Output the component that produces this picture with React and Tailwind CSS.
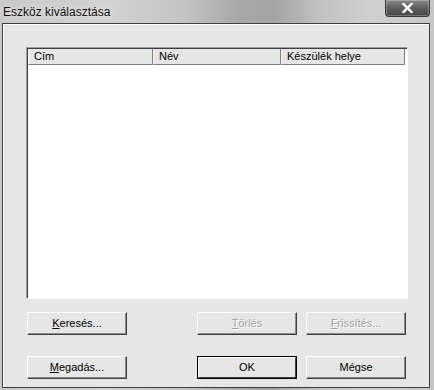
import React from 'react';

const btnBase =
  'w-[100px] h-[23px] flex items-center justify-center text-[11px] bg-[#e6e6e6] border border-t-white border-l-white border-r-[#404040] border-b-[#404040] shadow-[inset_-1px_-1px_0_#8a8a8a]';

function Btn({ label, ul, disabled, isDefault }) {
  const text = (
    <span className={disabled ? 'text-[#a3a3a3] [text-shadow:1px_1px_0_#ffffff]' : 'text-black'}>
      {ul ? (
        <>
          <span className="underline underline-offset-1">{label[0]}</span>
          {label.slice(1)}
        </>
      ) : (
        label
      )}
    </span>
  );
  if (isDefault) {
    return (
      <div className="w-[100px] h-[23px] border border-black flex">
        <div className="flex-1 flex items-center justify-center text-[11px] bg-[#e6e6e6] border border-t-white border-l-white border-r-[#404040] border-b-[#404040]">
          {text}
        </div>
      </div>
    );
  }
  return <div className={btnBase}>{text}</div>;
}

const COLS = [
  { name: 'Cím', w: 'w-[125px]' },
  { name: 'Név', w: 'w-[128px]' },
  { name: 'Készülék helye', w: 'w-[124px]' },
];

export default function App() {
  return (
    <div
      className="w-[434px] h-[390px] flex flex-col overflow-hidden bg-[linear-gradient(90deg,#c9c9c9_0%,#d2d2d2_25%,#c4c4c4_42%,#a8a8a8_55%,#a4a4a4_63%,#c2c2c2_74%,#d0d0d0_86%,#c6c6c6_100%)]"
      style={{ fontFamily: '"Liberation Sans", Arial, sans-serif' }}
    >
      {/* Title bar */}
      <div className="relative h-[23px] shrink-0">
        <span className="absolute left-[3px] top-[3px] text-[12px] text-[#111] [text-shadow:0_0_6px_#ffffff]">
          Eszköz kiválasztása
        </span>
        <div className="absolute left-[385px] top-0 w-[45px] h-[17px] rounded-b-[4px] border border-t-0 border-[#3a3a3a] bg-[linear-gradient(180deg,#8a8a8a_0%,#5e5e5e_50%,#474747_100%)] flex items-center justify-center shadow-[inset_0_0_0_1px_rgba(255,255,255,0.25)]">
          <svg width="11" height="10" viewBox="0 0 11 10">
            <path d="M1.5 1 L9.5 9 M9.5 1 L1.5 9" stroke="#ffffff" strokeWidth="2.4" strokeLinecap="square" />
          </svg>
        </div>
      </div>

      {/* Client area */}
      <div className="ml-[2px] w-[428px] h-[365px] border border-[#3f3f3f] bg-[#e6e6e6] shadow-[inset_1px_1px_0_#ffffff] pt-[23px] pl-[23px] flex flex-col">
        {/* List view */}
        <div className="w-[382px] h-[252px] border border-t-[#a0a0a0] border-l-[#a0a0a0] border-r-white border-b-white bg-white shadow-[inset_1px_1px_0_#404040] pt-[1px] pl-[1px]">
          <div className="flex h-[16px]">
            {COLS.map(c => (
              <div
                key={c.name}
                className={`${c.w} h-[16px] bg-[#e6e6e6] border-l border-l-white border-r border-r-[#808080] border-b border-b-[#808080] text-[11px] leading-[15px] pl-[5px] text-black`}
              >
                {c.name}
              </div>
            ))}
          </div>
        </div>

        {/* Buttons row 1 */}
        <div className="flex mt-[13px] pl-[1px]">
          <Btn label="Keresés..." ul />
          <div className="ml-[70px]">
            <Btn label="Törlés" ul disabled />
          </div>
          <div className="ml-[9px]">
            <Btn label="Frissítés..." ul disabled />
          </div>
        </div>

        {/* Buttons row 2 */}
        <div className="flex mt-[21px] pl-[1px]">
          <Btn label="Megadás..." ul />
          <div className="ml-[70px]">
            <Btn label="OK" isDefault />
          </div>
          <div className="ml-[9px]">
            <Btn label="Mégse" />
          </div>
        </div>
      </div>
    </div>
  );
}
